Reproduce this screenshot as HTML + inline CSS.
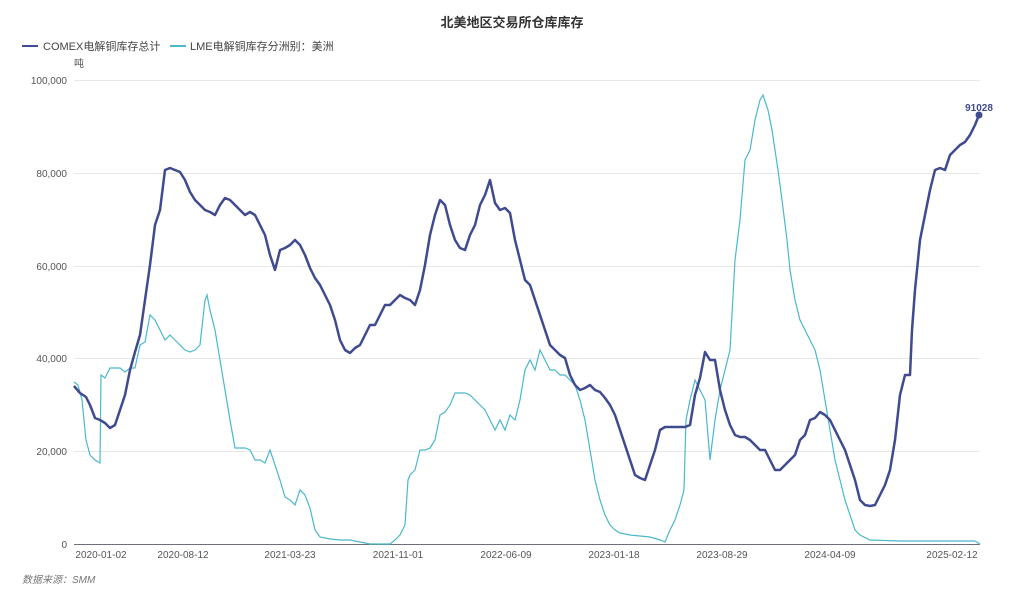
<!DOCTYPE html>
<html><head><meta charset="utf-8"><style>
body{margin:0;width:1024px;height:600px;background:#fff;overflow:hidden;font-family:"Liberation Sans","Noto Sans CJK SC",sans-serif;}
</style></head><body>
<svg width="1024" height="600" xmlns="http://www.w3.org/2000/svg" style="font-family:'Liberation Sans','Noto Sans CJK SC',sans-serif">
<text x="512" y="27" text-anchor="middle" font-size="13" font-weight="bold" fill="#333">北美地区交易所仓库库存</text>
<line x1="22" y1="46" x2="38" y2="46" stroke="#3f4a8f" stroke-width="2"/>
<text x="43" y="50" font-size="11" fill="#444">COMEX电解铜库存总计</text>
<line x1="170" y1="46" x2="186" y2="46" stroke="#4bb8cc" stroke-width="2"/>
<text x="190" y="50" font-size="11" fill="#444">LME电解铜库存分洲别：美洲</text>
<text x="74" y="67" font-size="10" fill="#555">吨</text>
<g stroke="#e8e8e8" stroke-width="1">
<line x1="74" y1="80.5" x2="980" y2="80.5"/><line x1="74" y1="173.5" x2="980" y2="173.5"/>
<line x1="74" y1="266.5" x2="980" y2="266.5"/><line x1="74" y1="358.5" x2="980" y2="358.5"/>
<line x1="74" y1="451.5" x2="980" y2="451.5"/></g>
<line x1="74" y1="544.5" x2="980" y2="544.5" stroke="#6e7079"/>
<g font-size="10" fill="#555" text-anchor="end">
<text x="67" y="84">100,000</text><text x="67" y="177">80,000</text><text x="67" y="270">60,000</text>
<text x="67" y="362">40,000</text><text x="67" y="455">20,000</text><text x="67" y="548">0</text></g>
<g font-size="10" fill="#555" text-anchor="middle">
<text x="101" y="558">2020-01-02</text><text x="183" y="558">2020-08-12</text><text x="290" y="558">2021-03-23</text>
<text x="398" y="558">2021-11-01</text><text x="506" y="558">2022-06-09</text><text x="614" y="558">2023-01-18</text>
<text x="722" y="558">2023-08-29</text><text x="830" y="558">2024-04-09</text><text x="952" y="558">2025-02-12</text></g>
<text x="22" y="583" font-size="10" font-style="italic" fill="#777">数据来源：SMM</text>
<polyline fill="none" stroke="#4bb8cc" stroke-width="1.2" points="74,382 78,385 82,400 86,440 90,455 95,460 100,463 101,375 105,378 110,368 115,368 120,368 125,372 130,368 135,368 140,345 145,342 150,315 155,320 160,330 165,340 170,335 175,340 180,345 185,350 190,352 195,350 200,345 205,300 207,295 210,310 215,330 220,360 225,390 230,420 235,448 240,448 245,448 250,450 255,460 260,460 265,463 270,450 275,465 280,480 285,497 290,500 295,505 300,490 305,495 310,508 315,530 320,537 330,539 340,540 350,540 360,542 370,544 390,544 395,540 400,535 405,525 408,480 410,475 415,470 420,450 425,450 430,448 435,440 440,415 445,412 450,405 455,393 460,393 465,393 470,395 475,400 480,405 485,410 490,420 495,430 500,420 505,430 510,415 515,420 520,400 525,370 530,360 535,370 540,350 545,360 550,370 555,370 560,375 565,375 570,380 575,385 580,400 585,420 590,450 595,480 600,500 605,515 610,525 615,530 620,533 630,535 640,536 650,537 660,540 665,542 670,530 675,520 680,505 684,490 686,420 690,400 695,380 700,390 705,400 710,460 715,420 720,390 725,370 730,350 735,260 740,220 745,160 750,150 755,120 760,100 763,95 768,110 772,130 778,170 782,200 787,240 790,270 795,300 800,320 805,330 810,340 815,350 820,370 825,400 830,430 835,460 840,480 845,500 850,515 855,530 860,535 870,540 900,541 975,541 980,544"/>
<polyline fill="none" stroke="#3f4a8f" stroke-width="2.5" stroke-linejoin="round" points="74,386 80,393 86,397 90,405 95,418 100,420 105,423 110,428 115,425 120,410 125,395 130,370 135,352 140,335 145,300 150,265 155,225 160,210 165,170 170,168 175,170 180,172 185,180 190,192 195,200 200,205 205,210 210,212 215,215 220,205 225,198 230,200 235,205 240,210 245,215 250,212 255,215 260,225 265,235 270,255 275,270 280,250 285,248 290,245 295,240 300,245 305,255 310,268 315,278 320,285 325,295 330,305 335,320 340,340 345,350 350,353 355,348 360,345 365,335 370,325 375,325 380,315 385,305 390,305 395,300 400,295 405,298 410,300 415,305 420,290 425,265 430,235 435,215 440,200 445,205 450,225 455,240 460,248 465,250 470,235 475,225 480,205 485,195 490,180 495,203 500,210 505,208 510,213 515,240 520,260 525,280 530,285 535,300 540,315 545,330 550,345 555,350 560,355 565,358 570,375 575,385 580,390 585,388 590,385 595,390 600,392 605,398 610,405 615,415 620,430 625,445 630,460 635,475 640,478 645,480 650,465 655,450 660,430 665,427 670,427 675,427 680,427 685,427 690,425 695,395 700,378 705,352 710,360 715,360 720,390 725,410 730,425 735,435 740,437 745,437 750,440 755,445 760,450 765,450 770,460 775,470 780,470 785,465 790,460 795,455 800,440 805,435 810,420 815,418 820,412 825,415 830,420 835,430 840,440 845,450 850,465 855,480 860,500 865,505 870,506 875,505 880,495 885,485 890,470 895,440 900,395 905,375 910,375 912,330 915,290 920,240 925,215 930,190 935,170 940,168 945,170 950,155 955,150 960,145 965,142 970,135 975,125 979,115"/>
<circle cx="979" cy="115" r="3.5" fill="#3f4a8f"/>
<text x="979" y="111" text-anchor="middle" font-size="10" font-weight="bold" fill="#3f4a8f">91028</text>
</svg>
</body></html>
